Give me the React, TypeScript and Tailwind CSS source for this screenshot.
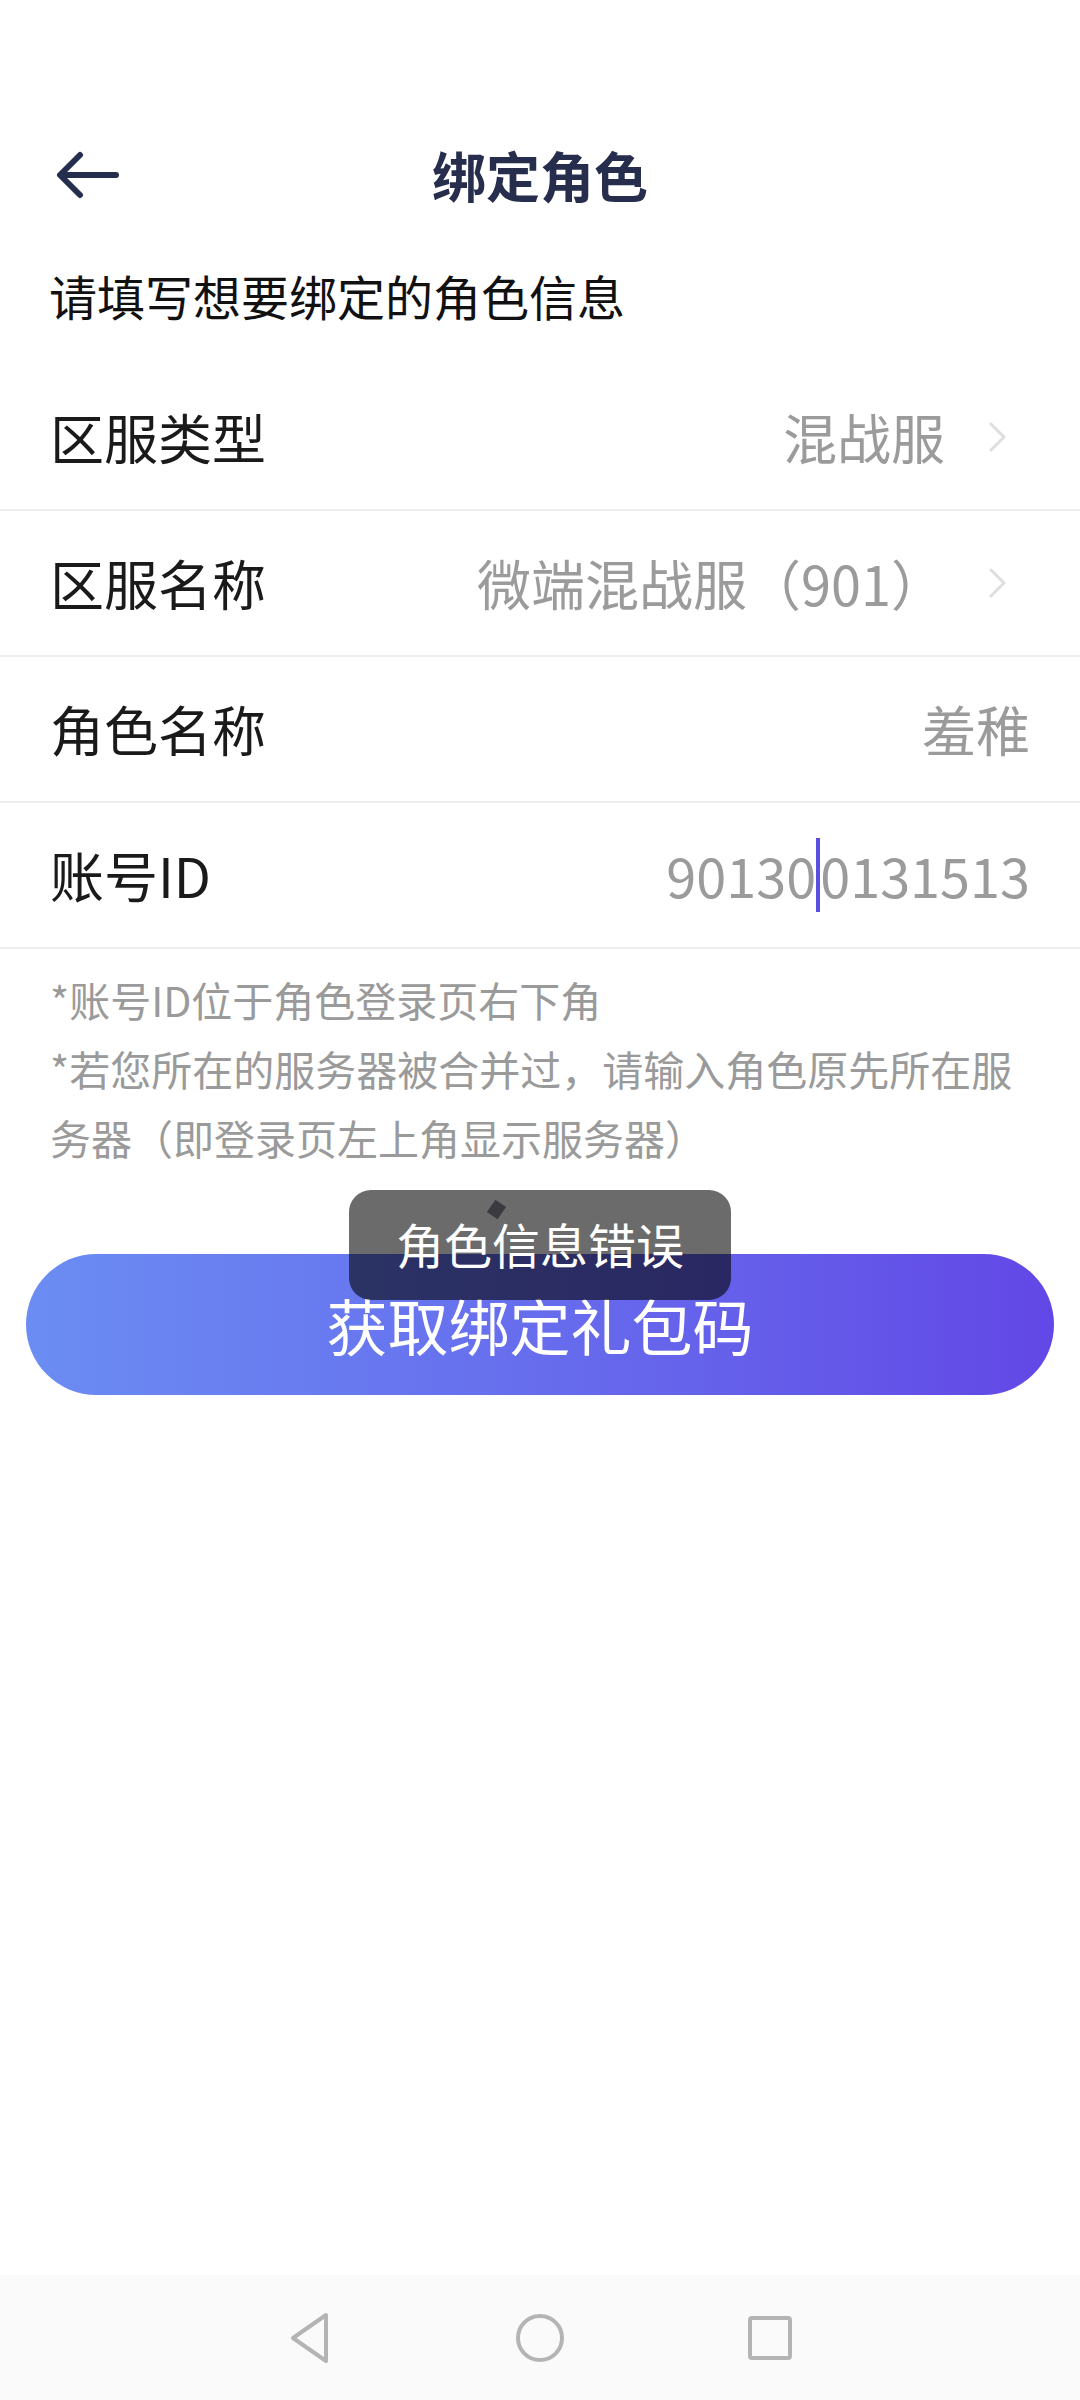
const font = '"Noto Sans CJK SC", "Noto Sans", sans-serif';

const Chevron = () => (
  <svg width="17" height="30" viewBox="0 0 17 30" className="ml-[44px] mr-[24px]">
    <path d="M2 2 L15 15 L2 28" fill="none" stroke="#dedede" strokeWidth="3" strokeLinecap="round" strokeLinejoin="round" />
  </svg>
);

const Row = ({ label, children }: { label: string; children: React.ReactNode }) => (
  <div className="h-[146px] border-b-2 border-[#eeeeee] flex items-center justify-between pl-[50px] pr-[50px]">
    <span className="text-[54px] text-[#1a1a1a] leading-none">{label}</span>
    <div className="flex items-center text-[54px] text-[#9b9b9b] leading-none">{children}</div>
  </div>
);

export default function App() {
  return (
    <div className="w-[1080px] h-[2400px] bg-white flex flex-col relative" style={{ fontFamily: font }}>
      {/* header */}
      <div className="pt-[120px]">
        <div className="h-[110px] flex items-center justify-center relative">
          <svg width="64" height="48" viewBox="0 0 64 48" className="absolute left-[56px] top-[31px]">
            <path d="M60 24 H5 M24 4 L4 24 L24 44" fill="none" stroke="#262e4e" strokeWidth="6" strokeLinecap="round" strokeLinejoin="round" />
          </svg>
          <h1 className="text-[54px] font-bold text-[#262d4d] leading-none">绑定角色</h1>
        </div>
      </div>

      {/* subtitle */}
      <p className="mt-[32px] h-[66px] leading-[66px] pl-[49px] text-[48px] text-[#111111]">请填写想要绑定的角色信息</p>

      {/* rows */}
      <div className="mt-[37px]">
        <Row label="区服类型">
          <span>混战服</span>
          <Chevron />
        </Row>
        <Row label="区服名称">
          <span>微端混战服（901）</span>
          <Chevron />
        </Row>
        <Row label="角色名称">
          <span>羞稚</span>
        </Row>
        <Row label="账号ID">
          <span>90130</span>
          <span className="w-[4px] h-[74px] bg-[#5a4ee0]"></span>
          <span>0131513</span>
        </Row>
      </div>

      {/* notes */}
      <div className="pt-[16px] px-[50px] text-[41px] leading-[69px] text-[#9a9a9a]">
        <p>*账号ID位于角色登录页右下角</p>
        <p>*若您所在的服务器被合并过，请输入角色原先所在服务器（即登录页左上角显示服务器）</p>
      </div>

      {/* button */}
      <div className="mt-[82px] mx-[26px] h-[141px] rounded-full bg-linear-to-r from-[#6b8df3] to-[#6247e6] flex items-center justify-center">
        <span className="text-[61px] text-white leading-none">获取绑定礼包码</span>
      </div>

      {/* toast */}
      <div className="absolute left-[349px] top-[1190px] w-[382px] h-[110px] rounded-[22px] bg-black/[0.58] flex items-center justify-center">
        <span className="text-[48px] text-white leading-none -mt-[4px]">角色信息错误</span>
        <span className="absolute left-[141px] top-[12px] w-[13px] h-[15px] bg-[#3a3a40] rotate-[35deg]"></span>
      </div>

      {/* nav bar */}
      <div className="mt-auto h-[125px] bg-[#fafafa] flex items-center justify-center gap-[170px]">
        <div className="w-[60px] flex justify-center">
          <svg width="44" height="52" viewBox="0 0 44 52">
            <path d="M38 3 L5 26 L38 49 Z" fill="none" stroke="#b4b4b4" strokeWidth="4" strokeLinejoin="round" />
          </svg>
        </div>
        <div className="w-[60px] flex justify-center">
          <svg width="50" height="50" viewBox="0 0 50 50">
            <circle cx="25" cy="25" r="22" fill="none" stroke="#b4b4b4" strokeWidth="4" />
          </svg>
        </div>
        <div className="w-[60px] flex justify-center">
          <svg width="46" height="46" viewBox="0 0 46 46">
            <rect x="3" y="3" width="40" height="40" rx="2" fill="none" stroke="#b4b4b4" strokeWidth="4" />
          </svg>
        </div>
      </div>
    </div>
  );
}
